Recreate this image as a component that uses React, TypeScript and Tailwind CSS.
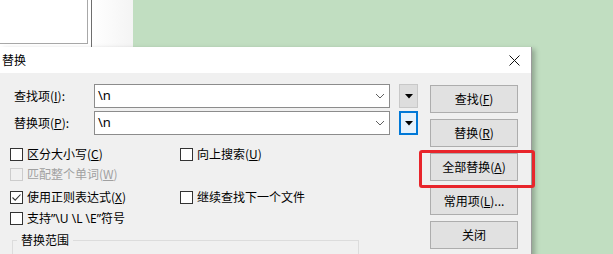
import React from "react";

const font = { fontFamily: '"Noto Sans CJK SC", "Noto Sans", sans-serif' };
const latin = { fontFamily: '"Noto Sans", "Noto Sans CJK SC", sans-serif' };

function Chevron() {
  return (
    <svg width="10" height="6" viewBox="0 0 10 6" className="mr-[4px]">
      <path d="M1 1 L5 5 L9 1" fill="none" stroke="#606060" strokeWidth="1" />
    </svg>
  );
}

function Tri() {
  return (
    <svg width="8" height="5" viewBox="0 0 8 5">
      <path d="M0 0 L8 0 L4 4.5 Z" fill="#000" />
    </svg>
  );
}

function Check({ checked, disabled }: { checked?: boolean; disabled?: boolean }) {
  return (
    <div
      className={`w-[13px] h-[13px] border flex items-center justify-center ${
        disabled ? "border-[#cccccc] bg-[#f0f0f0]" : "border-[#333333] bg-white"
      }`}
    >
      {checked && (
        <svg width="11" height="11" viewBox="0 0 11 11">
          <path d="M1.5 5.5 L4.2 8.2 L9.5 2.5" fill="none" stroke="#333" strokeWidth="1.1" />
        </svg>
      )}
    </div>
  );
}

function Row({ label, focused }: { label: React.ReactNode; focused?: boolean }) {
  return (
    <div className="flex items-center h-[24px]">
      <div className="w-[94px] pl-[14px] text-[12px] text-black">{label}</div>
      <div className="w-[296px] h-[24px] border border-[#8c8c8c] bg-white flex items-center justify-between">
        <span className="pl-[3px] text-[13px] text-black" style={latin}>\n</span>
        <Chevron />
      </div>
      <div
        className={`ml-[9px] w-[19px] h-[24px] flex items-center justify-center border ${
          focused ? "border-[#0078d7] border-2 bg-[#e5f1fb]" : "border-[#c8c8c8] bg-[#dddddd]"
        }`}
      >
        <Tri />
      </div>
    </div>
  );
}

function Btn({ children }: { children: React.ReactNode }) {
  return (
    <div className="w-[88px] h-[28px] bg-[#e1e1e1] border border-[#adadad] flex items-center justify-center text-[12px] text-black">
      {children}
    </div>
  );
}

export default function App() {
  return (
    <div className="relative w-[613px] h-[254px] overflow-hidden bg-[#c1dec1]" style={font}>
      {/* background window at top-left */}
      <div className="absolute left-0 top-0 w-[133px] h-[47px] bg-white flex">
        <div className="w-[88px] h-[44px] border-r border-b border-[#a8a8a8]" />
        <div className="ml-[3px] w-[1px] h-[47px] bg-[#6e6e6e]" />
        <div className="flex-1 bg-gradient-to-r from-white to-[#f4f4f4]" />
      </div>

      {/* dialog */}
      <div
        className="absolute left-0 top-[47px] w-[532px] h-[220px] bg-[#f0f0f0] border-r border-[#9a9a9a]"
        style={{ boxShadow: "3px 2px 5px rgba(0,0,0,0.25)" }}
      >
        <div className="h-[26px] bg-white flex items-center justify-between">
          <span className="pl-[2px] text-[12px] text-black">替换</span>
          <svg width="11" height="11" viewBox="0 0 11 11" className="mr-[11px]">
            <path d="M0.5 0.5 L10.5 10.5 M10.5 0.5 L0.5 10.5" stroke="#111" strokeWidth="1" />
          </svg>
        </div>
        <div className="flex">
          <div className="w-[430px] pt-[11px]">
            <Row label={<>查找项(<u>I</u>):</>} />
            <div className="mt-[3px]">
              <Row label={<>替换项(<u>P</u>):</>} focused />
            </div>
            <div className="mt-[9px] pl-[10px] grid grid-cols-[170px_auto] text-[12px] text-black">
              <div className="h-[20px] flex items-center gap-[4px]">
                <Check />
                <span>区分大小写(<u>C</u>)</span>
              </div>
              <div className="h-[20px] flex items-center gap-[4px]">
                <Check />
                <span>向上搜索(<u>U</u>)</span>
              </div>
              <div className="h-[20px] flex items-center gap-[4px] text-[#a0a0a0]">
                <Check disabled />
                <span>匹配整个单词(<u>W</u>)</span>
              </div>
              <div className="h-[20px]" />
              <div className="mt-[3px] h-[20px] flex items-center gap-[4px]">
                <Check checked />
                <span>使用正则表达式(<u>X</u>)</span>
              </div>
              <div className="mt-[3px] h-[20px] flex items-center gap-[4px]">
                <Check />
                <span>继续查找下一个文件</span>
              </div>
              <div className="mt-[1px] h-[20px] flex items-center gap-[4px]">
                <Check />
                <span>
                  支持<span style={latin}>”\U \L \E”</span>符号
                </span>
              </div>
            </div>
            <div className="relative mt-[12px] ml-[12px] w-[347px] h-[40px] border border-[#dcdcdc]">
              <span className="absolute left-[4px] top-[-9px] px-[4px] bg-[#f0f0f0] text-[12px] text-black leading-[16px]">
                替换范围
              </span>
            </div>
          </div>
          <div className="pt-[12px] flex flex-col gap-[6px]">
            <Btn>查找(<u>F</u>)</Btn>
            <Btn>替换(<u>R</u>)</Btn>
            <Btn>全部替换(<u>A</u>)</Btn>
            <Btn>常用项(<u>L</u>)...</Btn>
            <Btn>关闭</Btn>
          </div>
        </div>
      </div>

      {/* red highlight */}
      <div className="absolute left-[419px] top-[150px] w-[116px] h-[38px] border-[3px] border-[#e8252b] rounded-[3px]" />
    </div>
  );
}
